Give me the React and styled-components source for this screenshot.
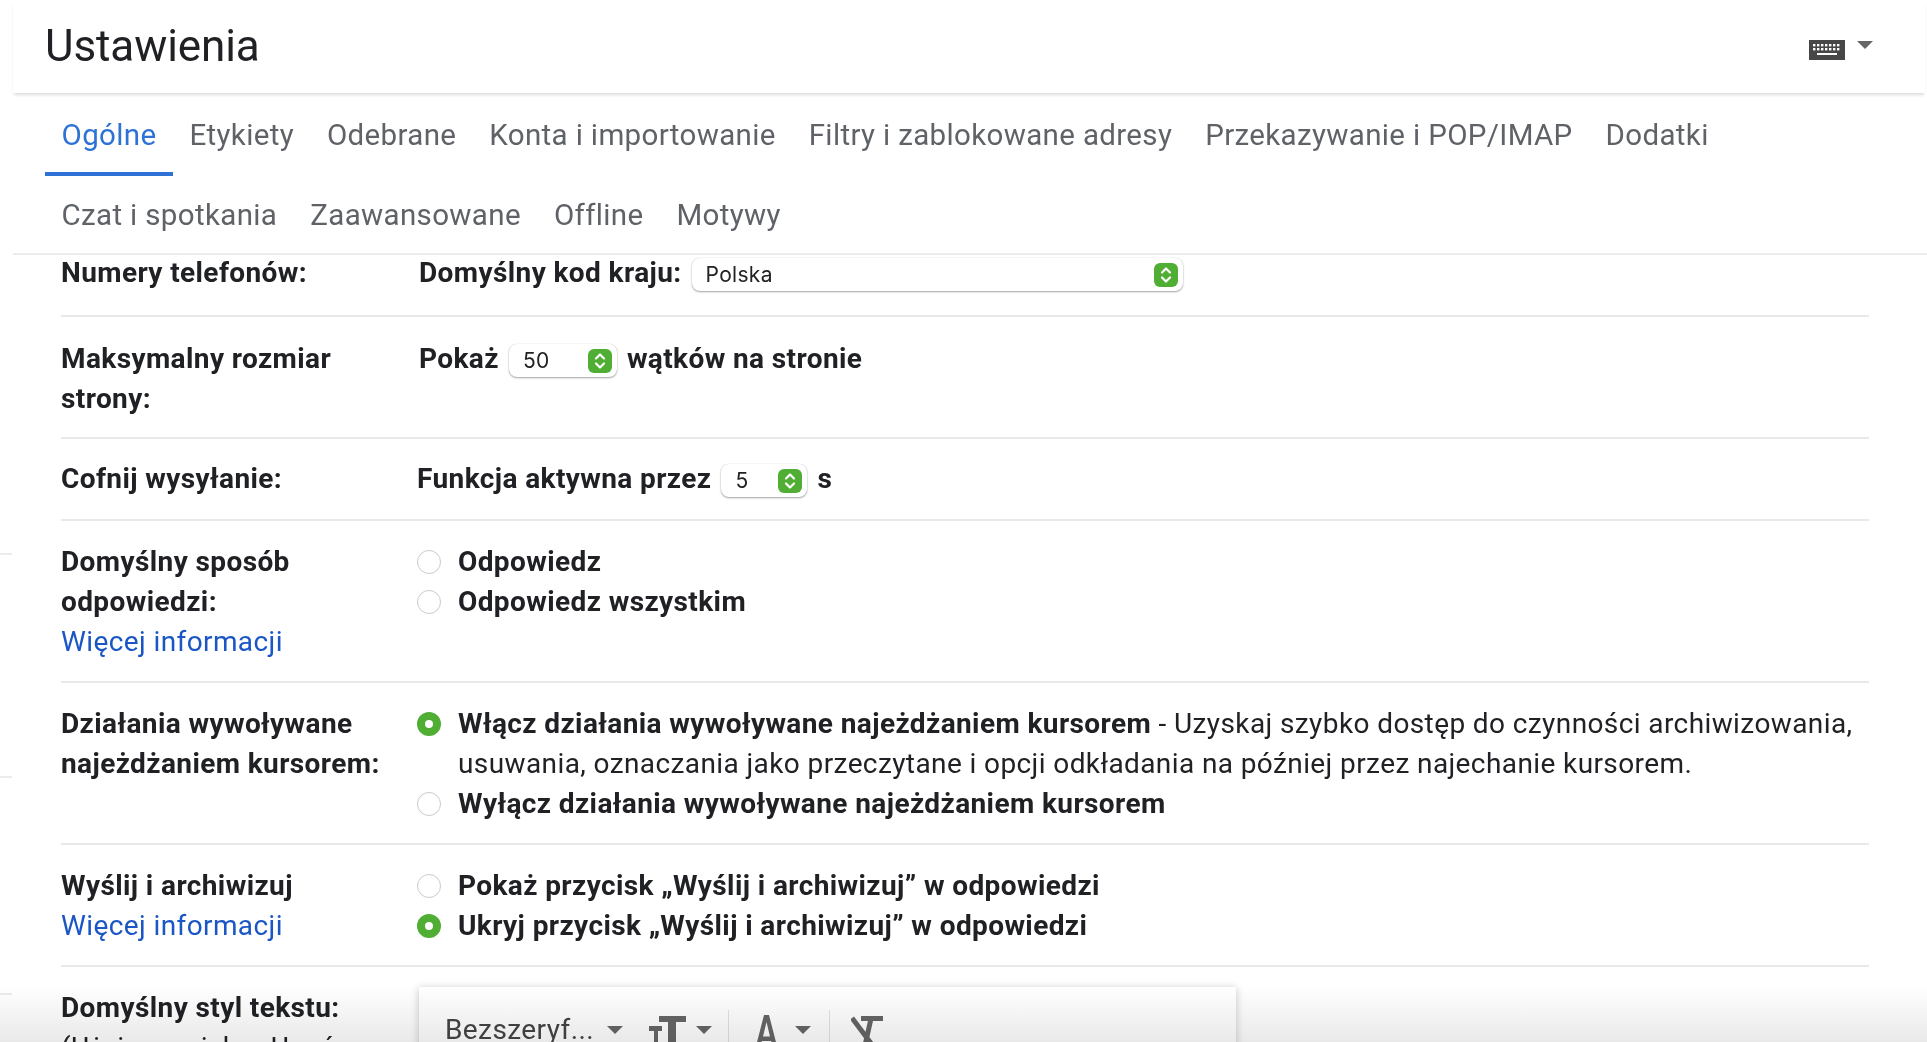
import React from 'react';
import styled, { createGlobalStyle } from 'styled-components';

const GlobalStyle = createGlobalStyle`
  html, body {
    margin: 0;
    height: 100%;
    background: #fff;
    overflow: hidden;
  }
  body {
    font-family: Roboto, "Liberation Sans", sans-serif;
    color: #202124;
  }
`;

const Page = styled.div`
  position: relative;
  height: 1042px;
  overflow: hidden;
`;

const Header = styled.header`
  height: 93px;
  margin: 0 2px 0 13px;
  padding: 0 52px 0 32px;
  display: flex;
  align-items: center;
  justify-content: space-between;
  box-shadow: 0 3px 3px -1px rgba(0, 0, 0, 0.14);
`;

const Title = styled.h1`
  margin: 0 0 2px;
  font-size: 44px;
  font-weight: 400;
  letter-spacing: -0.1px;
`;

const KeyboardMenu = styled.div`
  display: flex;
  align-items: flex-start;
  gap: 12px;
  margin-top: 6px;
`;

const Caret = styled.span`
  display: block;
  flex: none;
  width: 0;
  height: 0;
  margin-top: ${(p) => p.$top || 0}px;
  border-left: 8px solid transparent;
  border-right: 8px solid transparent;
  border-top: 8px solid #666;
`;

const Tabs = styled.nav`
  height: 162px;
  margin-left: 13px;
  padding: 3px 0 0 32px;
  box-sizing: border-box;
  border-bottom: 2px solid #ececec;
`;

const TabRow = styled.div`
  display: flex;
  height: 80px;
`;

const Tab = styled.a`
  display: flex;
  align-items: center;
  height: 80px;
  padding: 2px 16.5px 0;
  box-sizing: border-box;
  font-size: 29.5px;
  letter-spacing: 0.35px;
  white-space: nowrap;
  color: ${(p) => (p.$active ? '#2f72d6' : '#5f6368')};
  border-bottom: 4px solid ${(p) => (p.$active ? '#2f72d6' : 'transparent')};
`;

const Settings = styled.main`
  margin: -2px 58px 0 61px;
`;

const Row = styled.section`
  display: grid;
  grid-template-columns: 356px 1fr;
  padding: ${(p) => p.$top ?? 21}px 0 ${(p) => p.$bottom ?? 19}px;
  border-bottom: 2px solid #e9e9e9;
  font-size: 28px;
  line-height: 40px;
  letter-spacing: 0.4px;
`;

const Label = styled.div`
  width: 325px;
  font-weight: 700;
`;

const More = styled.a`
  display: block;
  font-weight: 400;
  color: #1a56c4;
`;

const Plain = styled.div`
  font-weight: 400;
`;

const Inline = styled.div`
  display: flex;
  align-items: center;
  gap: 10px;
  font-weight: 700;
  height: 40px;
  margin-left: ${(p) => p.$shift || 0}px;
`;

const SelectBox = styled.div`
  display: flex;
  align-items: center;
  justify-content: space-between;
  width: ${(p) => p.$width}px;
  height: 33px;
  margin-top: 3px;
  box-sizing: border-box;
  padding: 0 5px 0 14px;
  background: #fff;
  border-radius: 8px;
  box-shadow: 0 1px 2px rgba(0, 0, 0, 0.35), 0 0 1px rgba(0, 0, 0, 0.2);
  font-family: Inter, sans-serif;
  font-weight: 400;
  font-size: 21px;
  letter-spacing: 0.3px;
  color: #222;
`;

const Stepper = styled.span`
  display: flex;
  align-items: center;
  justify-content: center;
  width: 24px;
  height: 24px;
  border-radius: 6px;
  background: #4fae33;
`;

const Option = styled.div`
  display: flex;
  gap: 17px;
`;

const Radio = styled.span`
  flex: none;
  width: 24px;
  height: 24px;
  margin-top: 8px;
  box-sizing: border-box;
  border-radius: 50%;
  background: #fff;
  border: ${(p) => (p.$on ? '8px solid #4fae33' : '1.5px solid #cacaca')};
`;

const OptionText = styled.div`
  font-weight: ${(p) => (p.$bold ? 700 : 400)};

  b {
    font-weight: 700;
  }
`;

const Toolbar = styled.div`
  display: flex;
  align-items: center;
  width: 817px;
  height: 86px;
  margin: -1px 0 0 2px;
  padding-left: 26px;
  box-sizing: border-box;
  background: #fff;
  box-shadow: 0 1px 8px rgba(0, 0, 0, 0.22);
  color: #444;
`;

const FontName = styled.span`
  width: 162px;
`;

const ToolGroup = styled.div`
  display: flex;
  align-items: center;
  gap: ${(p) => p.$gap}px;
  height: 40px;
  padding: 0 ${(p) => p.$right}px 0 ${(p) => p.$left}px;
  border-left: ${(p) => (p.$line ? '1px solid #e2e2e2' : 'none')};
`;

const BottomFade = styled.div`
  position: absolute;
  left: 0;
  right: 0;
  bottom: 0;
  height: 56px;
  background: linear-gradient(#fff, #e9e9e9);
  mix-blend-mode: multiply;
  pointer-events: none;
`;

const EdgeTick = styled.span`
  position: absolute;
  left: 0;
  top: ${(p) => p.$top}px;
  width: 12px;
  height: 2px;
  background: #ececec;
`;

const UpDown = () => (
  <svg width="14" height="18" viewBox="0 0 14 18" fill="none" stroke="#fff" strokeWidth="2.2" strokeLinecap="round" strokeLinejoin="round">
    <path d="M3 6.5 7 2.5l4 4M3 11.5l4 4 4-4" />
  </svg>
);

const KeyboardIcon = () => (
  <svg width="36" height="20" viewBox="0 0 36 20" fill="#fff">
    <rect width="36" height="20" fill="#474747" />
    {[0, 1, 2, 3, 4, 5, 6].map((i) => (
      <g key={i}>
        <rect x={4 + i * 4} y="4" width="2.4" height="2.4" />
        <rect x={4 + i * 4} y="8" width="2.4" height="2.4" />
      </g>
    ))}
    <rect x="8" y="13" width="20" height="2" />
  </svg>
);

const TextSizeIcon = () => (
  <svg width="37" height="40" viewBox="0 0 37 40" fill="#666">
    <path d="M10 6h27v6H27v28h-8V12h-9z" />
    <path d="M0 16h13v5H9v19H5V21H0z" />
  </svg>
);

const TextColorIcon = () => (
  <svg width="23" height="40" viewBox="0 0 23 40" fill="#666">
    <path d="M9 5h5l9 35h-4.500l-2.300-9H6.800l-2.300 9H0zM8 26.500h7L11.500 12z" fillRule="evenodd" />
  </svg>
);

const ClearFormatIcon = () => (
  <svg width="32" height="40" viewBox="0 0 32 40" fill="none" stroke="#666" strokeWidth="5">
    <path d="M10 8.500h22M20 8.500 13 40M1 8l24 32" />
  </svg>
);

const topTabs = ['Ogólne', 'Etykiety', 'Odebrane', 'Konta i importowanie', 'Filtry i zablokowane adresy', 'Przekazywanie i POP/IMAP', 'Dodatki'];
const lowerTabs = ['Czat i spotkania', 'Zaawansowane', 'Offline', 'Motywy'];

export default function App() {
  return (
    <Page>
      <GlobalStyle />
      <Header>
        <Title>Ustawienia</Title>
        <KeyboardMenu>
          <KeyboardIcon />
          <Caret $top={1} />
        </KeyboardMenu>
      </Header>

      <Tabs>
        <TabRow>
          {topTabs.map((t, i) => (
            <Tab key={t} $active={i === 0}>{t}</Tab>
          ))}
        </TabRow>
        <TabRow>
          {lowerTabs.map((t) => (
            <Tab key={t}>{t}</Tab>
          ))}
        </TabRow>
      </Tabs>

      <Settings>
        <Row $top={0} $bottom={22}>
          <Label>Numery telefonów:</Label>
          <Inline $shift={2}>
            Domyślny kod kraju:
            <SelectBox $width={491}>Polska<Stepper><UpDown /></Stepper></SelectBox>
          </Inline>
        </Row>

        <Row $top={22} $bottom={18}>
          <Label>Maksymalny rozmiar strony:</Label>
          <Inline $shift={2}>
            Pokaż
            <SelectBox $width={108}>50<Stepper><UpDown /></Stepper></SelectBox>
            wątków na stronie
          </Inline>
        </Row>

        <Row $top={20} $bottom={20}>
          <Label>Cofnij wysyłanie:</Label>
          <Inline>
            Funkcja aktywna przez
            <SelectBox $width={86}>5<Stepper><UpDown /></Stepper></SelectBox>
            s
          </Inline>
        </Row>

        <Row>
          <Label>
            Domyślny sposób odpowiedzi:
            <More>Więcej informacji</More>
          </Label>
          <div>
            <Option><Radio /><OptionText $bold>Odpowiedz</OptionText></Option>
            <Option><Radio /><OptionText $bold>Odpowiedz wszystkim</OptionText></Option>
          </div>
        </Row>

        <Row>
          <Label>Działania wywoływane najeżdżaniem kursorem:</Label>
          <div>
            <Option>
              <Radio $on />
              <OptionText>
                <b>Włącz działania wywoływane najeżdżaniem kursorem</b> - Uzyskaj szybko dostęp do czynności archiwizowania, usuwania, oznaczania jako przeczytane i opcji odkładania na później przez najechanie kursorem.
              </OptionText>
            </Option>
            <Option><Radio /><OptionText $bold>Wyłącz działania wywoływane najeżdżaniem kursorem</OptionText></Option>
          </div>
        </Row>

        <Row>
          <Label>
            Wyślij i archiwizuj
            <More>Więcej informacji</More>
          </Label>
          <div>
            <Option><Radio /><OptionText $bold>Pokaż przycisk „Wyślij i archiwizuj” w odpowiedzi</OptionText></Option>
            <Option><Radio $on /><OptionText $bold>Ukryj przycisk „Wyślij i archiwizuj” w odpowiedzi</OptionText></Option>
          </div>
        </Row>

        <Row>
          <Label>
            Domyślny styl tekstu:
            <Plain>(Użyj przycisku „Usuń formatowanie”</Plain>
          </Label>
          <Toolbar>
            <FontName>Bezszeryf...</FontName>
            <Caret />
            <ToolGroup $left={26} $right={16} $gap={10}><TextSizeIcon /><Caret /></ToolGroup>
            <ToolGroup $line $left={26} $right={18} $gap={17}><TextColorIcon /><Caret /></ToolGroup>
            <ToolGroup $line $left={21} $right={0} $gap={0}><ClearFormatIcon /></ToolGroup>
          </Toolbar>
        </Row>
      </Settings>

      <EdgeTick $top={553} />
      <EdgeTick $top={776} />
      <EdgeTick $top={993} />
      <BottomFade />
    </Page>
  );
}
